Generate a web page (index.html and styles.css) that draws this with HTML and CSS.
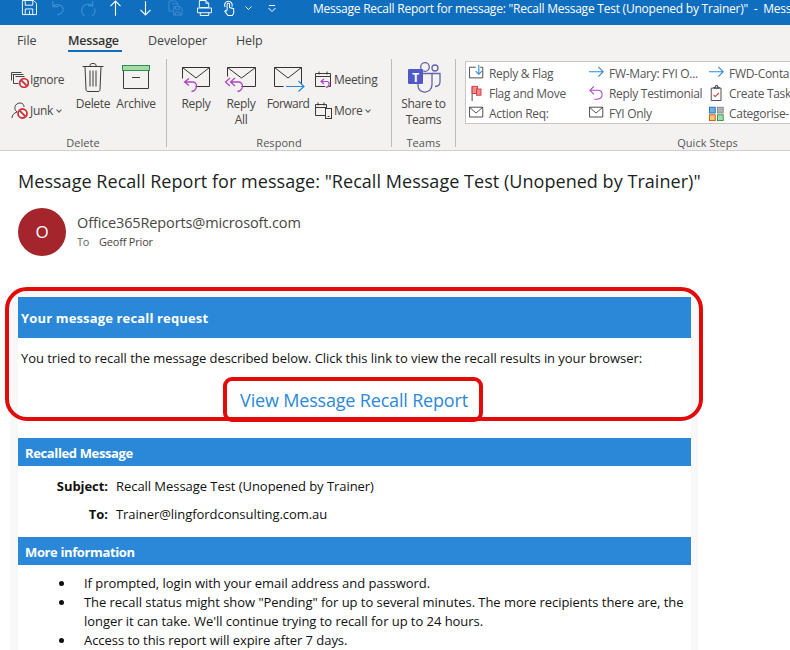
FILE: index.html
```html
<!DOCTYPE html>
<html lang="en">
<head>
<meta charset="utf-8">
<title>Message Recall Report</title>
<link rel="stylesheet" href="styles.css">
</head>
<body>
<div class="window">
  <header class="titlebar">
    <div class="qat">
      <svg class="qat-icon w-save" viewBox="0 0 17 17"><path d="M1.500 .5h12l3 3v12h-15z M4.500 .5v5h8v-5 M4.500 15.500v-6h8v6 M9 11.500v4" fill="none" stroke="#fff"/></svg>
      <svg class="qat-icon w-undo" viewBox="0 0 16 17"><path d="M3 1v6h6 M3 7c3-4 11-2 11 3 0 3-3 5-6 6" fill="none" stroke="#3f8fd4" stroke-width="1.200"/></svg>
      <svg class="qat-icon w-redo" viewBox="0 0 17 17"><path d="M14 1v5h-5 M14 6A7 7 0 1 0 16 9" fill="none" stroke="#3f8fd4" stroke-width="1.200"/></svg>
      <svg class="qat-icon w-up" viewBox="0 0 12 17"><path d="M6 17V1 M.5 6.500L6 1l5.500 5.500" fill="none" stroke="#fff" stroke-width="1.200"/></svg>
      <svg class="qat-icon w-down" viewBox="0 0 12 17"><path d="M6 1v15 M.5 10.500L6 16l5.500-5.500" fill="none" stroke="#fff" stroke-width="1.200"/></svg>
      <svg class="qat-icon w-copy" viewBox="0 0 16 17"><path d="M1 1h7l2 2v3 M1 1v11h4 M4 4h6l1 1 M6 7h7l2 2v7H6z M8 7v3h4V7 M8 16v-3h5v3" fill="none" stroke="#3f8fd4"/></svg>
      <svg class="qat-icon w-print" viewBox="0 0 16 17"><path d="M2.500 8V.5h7l3 3V8 M9.500 .5v3h3 M3.500 8h9 M.5 8.500h15v5h-15z M3.500 13.500v3h9v-3" fill="none" stroke="#fff"/></svg>
      <svg class="qat-icon w-touch" viewBox="0 0 14 17"><path d="M5 11V4.500a1.300 1.300 0 0 1 2.600 0V8l4.400 1.200V14l-1.500 2.500H6L2.500 12l1-1L5 12 M3 7.500A4 4 0 1 1 10 7" fill="none" stroke="#fff" stroke-width="1.100"/></svg>
      <svg class="qat-icon w-chev" viewBox="0 0 7 4"><path d="M.5 .5L3.500 3.500 6.500 .5" fill="none" stroke="#fff"/></svg>
      <svg class="qat-icon w-cust" viewBox="0 0 8 7"><path d="M1 .5h6 M.5 3L4 6.500 7.500 3" fill="none" stroke="#fff"/></svg>
    </div>
    <div class="title-text">Message Recall Report for message: "Recall Message Test (Unopened by Trainer)"&nbsp; -&nbsp; Message (HTML)</div>
  </header>

  <nav class="tabs">
    <span class="tab tab-file">File</span>
    <span class="tab tab-message">Message</span>
    <span class="tab tab-dev">Developer</span>
    <span class="tab tab-help">Help</span>
  </nav>

  <section class="ribbon">
    <div class="group g-delete">
      <div class="group-body">
        <div class="small-col col-del">
          <div class="small-btn">
            <svg class="sm-icon" viewBox="0 0 18 18"><path d="M.5 2.500h10 M1.500 4.500h11 M.5 2.500v8 M2.500 4.500v9h5 M4.500 6.500h9" fill="none" stroke="#444"/><circle cx="13" cy="13" r="4.300" fill="#fff" stroke="#d13438" stroke-width="1.800"/><path d="M10 10l6 6" stroke="#d13438" stroke-width="1.800"/></svg>
            <span>Ignore</span>
          </div>
          <div class="small-btn">
            <svg class="sm-icon" viewBox="0 0 18 18"><path d="M1 17c0-3 2-5 5-6-4-3-2-9 3-9 3 0 4 2 4 4" fill="none" stroke="#444"/><circle cx="11.500" cy="12.500" r="4.500" fill="#fff" stroke="#d13438" stroke-width="1.800"/><path d="M8.500 9.500l6 6" stroke="#d13438" stroke-width="1.800"/></svg>
            <span>Junk<i class="caret"></i></span>
          </div>
        </div>
        <div class="big-btn b-delete">
          <svg class="big-icon" viewBox="0 0 44 37"><path d="M11.500 7.500h21 M14 7.500l1 23c0 1 .5 2 2 2h10c1.500 0 2-1 2-2l1-23 M19 7.500V6c0-2 6-2 6 0v1.500 M19 11.500v16 M22 11.500v16 M25 11.500v16" fill="none" stroke="#3b3a39" stroke-width="1"/></svg>
          <span>Delete</span>
        </div>
        <div class="big-btn b-archive">
          <svg class="big-icon" viewBox="0 0 42 37"><path d="M8.500 11.500v18h25v-18" fill="none" stroke="#3b3a39"/><rect x="7.500" y="6.500" width="27" height="5" fill="#a4dba6" stroke="#2f8f4e"/><path d="M17 18.500h8" stroke="#3b3a39"/></svg>
          <span>Archive</span>
        </div>
      </div>
      <div class="group-label">Delete</div>
    </div>

    <div class="group g-respond">
      <div class="group-body">
        <div class="big-btn b-reply">
          <svg class="big-icon" viewBox="0 0 46 37"><path d="M9.500 8.500h27v19h-14 M9.500 8.500v11 M9.500 8.500L23 19 36.500 8.500" fill="none" stroke="#333"/><path d="M16 19.500l-4.500 3.500 4.500 3.500 M11.500 23h8c5 0 6 8-1 9.500" fill="none" stroke="#b146c2" stroke-width="1.300"/></svg>
          <span>Reply</span>
        </div>
        <div class="big-btn b-replyall">
          <svg class="big-icon" viewBox="0 0 44 37"><path d="M8.500 8.500h28v19h-14 M8.500 8.500v9 M8.500 8.500L22.500 19 36.500 8.500" fill="none" stroke="#333"/><path d="M11 19l-4.500 4 4.500 4 M16 19l-4.500 4 4.500 4 M11.500 23h8c5 0 6 8-1 9.500" fill="none" stroke="#b146c2" stroke-width="1.300"/></svg>
          <span>Reply<br>All</span>
        </div>
        <div class="big-btn b-forward">
          <svg class="big-icon" viewBox="0 0 50 37"><path d="M11.500 8.500h27v17 M11.500 8.500v19h9 M11.500 8.500L25 19 38.500 8.500" fill="none" stroke="#333"/><path d="M23 27.500h17 M35.500 22l5.500 5.500-5.500 5" fill="none" stroke="#2b88d8" stroke-width="1.200"/></svg>
          <span class="label-forward">Forward</span>
        </div>
        <div class="small-col col-resp">
          <div class="small-btn">
            <svg class="sm-icon" viewBox="0 0 18 18"><path d="M.5 3.500h15v13h-15z M.5 6.500h15 M4 1.500v3 M12 1.500v3" fill="none" stroke="#3b3a39"/><path d="M9 9l-3 2.500L9 14 M6 11.500h6c3 0 3 5-1 6" fill="#f3f2f1" stroke="#b146c2" stroke-width="1.200"/></svg>
            <span>Meeting</span>
          </div>
          <div class="small-btn">
            <svg class="sm-icon" viewBox="0 0 18 18"><path d="M.5 3.500h11v11h-11z M.5 6.500h11 M3 1.500v3 M9 1.500v3" fill="none" stroke="#3b3a39"/><rect x="10.500" y="7.500" width="6" height="10" fill="#f3f2f1" stroke="#3b3a39"/><path d="M12.500 15.500h2" stroke="#3b3a39"/></svg>
            <span>More<i class="caret"></i></span>
          </div>
        </div>
      </div>
      <div class="group-label">Respond</div>
    </div>

    <div class="group g-teams">
      <div class="group-body">
        <div class="big-btn b-teams">
          <svg class="big-icon" viewBox="0 0 63 37">
            <circle cx="33" cy="8" r="4.300" fill="none" stroke="#6264a7" stroke-width="1.300"/>
            <circle cx="43" cy="9" r="3" fill="none" stroke="#6264a7" stroke-width="1.300"/>
            <path d="M40 14.500h8v8c0 3-2 5-5 5" fill="none" stroke="#6264a7" stroke-width="1.300"/>
            <path d="M26 14.500h14v11c0 10-14 10-14 1z" fill="#f3f2f1" stroke="#6264a7" stroke-width="1.300"/>
            <rect x="16" y="10" width="15" height="15" rx="1" fill="#5059c9"/>
            <text class="teams-t" x="23.500" y="22.500">T</text>
          </svg>
          <span>Share to<br>Teams</span>
        </div>
      </div>
      <div class="group-label">Teams</div>
    </div>

    <div class="group g-quick">
      <div class="group-body">
        <div class="gallery">
          <div class="qs">
            <svg class="qs-icon" viewBox="0 0 18 18"><path d="M.5 2.500v12h15v-12h-3 M.5 2.500h7" fill="none" stroke="#3b3a39"/><path d="M11 0v10 M7.500 7l3.500 3.500L14.500 7" fill="none" stroke="#2b88d8" stroke-width="1.200"/></svg>
            <span>Reply &amp; Flag</span>
          </div>
          <div class="qs">
            <svg class="qs-icon" viewBox="0 0 18 18"><path d="M3.500 2v16" stroke="#3b3a39"/><rect x="3.500" y="1.500" width="6" height="8" fill="#f28b8b" stroke="#d13438"/><rect x="8.500" y="4.500" width="5" height="7" fill="#f28b8b" stroke="#d13438"/></svg>
            <span>Flag and Move</span>
          </div>
          <div class="qs">
            <svg class="qs-icon" viewBox="0 0 18 18"><path d="M.5 2.500h15v11h-15z M.5 2.500L8 9l7.500-6.500" fill="none" stroke="#3b3a39"/></svg>
            <span>Action Req:</span>
          </div>
          <div class="qs">
            <svg class="qs-icon" viewBox="0 0 18 18"><path d="M0 7.500h15 M10.500 2l5.500 5.500L10.500 13" fill="none" stroke="#2b88d8" stroke-width="1.200"/></svg>
            <span>FW-Mary: FYI O...</span>
          </div>
          <div class="qs">
            <svg class="qs-icon" viewBox="0 0 18 18"><path d="M5.500 1.500L1 6l4.500 4.500 M1 6h9c6 0 7 9-1 10H6" fill="none" stroke="#b146c2" stroke-width="1.200"/></svg>
            <span>Reply Testimonial</span>
          </div>
          <div class="qs">
            <svg class="qs-icon" viewBox="0 0 18 18"><path d="M.5 2.500h15v11h-15z M.5 2.500L8 9l7.500-6.500" fill="none" stroke="#3b3a39"/></svg>
            <span>FYI Only</span>
          </div>
          <div class="qs">
            <svg class="qs-icon" viewBox="0 0 18 18"><path d="M0 7.500h15 M10.500 2l5.500 5.500L10.500 13" fill="none" stroke="#2b88d8" stroke-width="1.200"/></svg>
            <span>FWD-Conta</span>
          </div>
          <div class="qs">
            <svg class="qs-icon" viewBox="0 0 18 18"><path d="M2.500 3.500h11v14h-11z M5.500 3.500v-1h2V.5h2v2h2v1z" fill="#fff" stroke="#3b3a39"/><path d="M5 11l2 2 4-4" fill="none" stroke="#d13438" stroke-width="1.200"/></svg>
            <span>Create Task</span>
          </div>
          <div class="qs">
            <svg class="qs-icon" viewBox="0 0 18 18"><rect x=".5" y="2.500" width="6.500" height="6.500" fill="#71afe5" stroke="#106ebe"/><rect x="9.500" y="2.500" width="6.500" height="6.500" fill="#b3b0ad" stroke="#8a8886"/><rect x=".5" y="11" width="6.500" height="6.500" fill="#f9c66b" stroke="#ca5010"/><rect x="9.500" y="11" width="6.500" height="6.500" fill="#a4dba6" stroke="#2f8f4e"/></svg>
            <span>Categorise-</span>
          </div>
        </div>
      </div>
      <div class="group-label">Quick Steps</div>
    </div>
  </section>

  <main class="message">
    <h1 class="subject">Message Recall Report for message: "Recall Message Test (Unopened by Trainer)"</h1>
    <div class="sender">
      <div class="avatar">O</div>
      <div class="sender-text">
        <div class="sender-mail">Office365Reports@microsoft.com</div>
        <div class="sender-to"><span class="to-label">To</span><span>Geoff Prior</span></div>
      </div>
    </div>

    <div class="mail-shell">
      <article class="card">
        <h2 class="band band-main">Your message recall request</h2>
        <p class="intro">You tried to recall the message described below. Click this link to view the recall results in your browser:</p>
        <div class="link-row"><a class="report-link">View Message Recall Report</a></div>

        <h2 class="band band-sub">Recalled Message</h2>
        <div class="meta">
          <b>Subject:</b><span>Recall Message Test (Unopened by Trainer)</span>
          <b>To:</b><span>Trainer@lingfordconsulting.com.au</span>
        </div>

        <h2 class="band band-sub">More information</h2>
        <ul class="info">
          <li><span>If prompted, login with your email address and password.</span></li>
          <li><span>The recall status might show "Pending" for up to several minutes. The more recipients there are, the longer it can take. We'll continue trying to recall for up to 24 hours.</span></li>
          <li><span>Access to this report will expire after 7 days.</span></li>
        </ul>
      </article>
    </div>

    <div class="mark mark-outer"></div>
    <div class="mark mark-inner"></div>
  </main>
</div>
</body>
</html>
```
FILE: styles.css
```css
* { box-sizing: border-box; }
html, body { margin: 0; padding: 0; }
body {
  width: 790px;
  height: 650px;
  overflow: hidden;
  background: #fff;
  font-family: "Open Sans", "Noto Sans", "Liberation Sans", sans-serif;
}
.window { width: 790px; height: 650px; overflow: hidden; display: flex; flex-direction: column; }

/* title bar */
.titlebar { height: 25px; flex: none; background: #106ebe; display: flex; color: #fff; overflow: hidden; }
.qat { width: 313px; flex: none; display: flex; align-items: flex-start; padding: 0 0 0 21px; }
.qat-icon { display: block; height: 16px; flex: none; }
.w-save { width: 16px; }
.w-undo { width: 15px; margin-left: 13px; }
.w-redo { width: 17px; margin-left: 14px; }
.w-up { width: 11px; margin-left: 14px; }
.w-down { width: 11px; margin-left: 19px; }
.w-copy { width: 15px; margin-left: 17px; }
.w-print { width: 15px; margin-left: 14px; }
.w-touch { width: 14px; margin-left: 10px; }
.w-chev { width: 7px; height: 4px; margin: 6px 0 0 9px; }
.w-cust { width: 8px; height: 7px; margin: 5px 0 0 16px; }
.title-text { font-size: 12px; line-height: 18px; white-space: nowrap; letter-spacing: -.23px; }

/* tabs */
.tabs { height: 30px; flex: none; background: #f3f2f1; display: flex; font-size: 12.500px; color: #444; }
.tab { display: block; height: 27px; line-height: 31px; letter-spacing: -.1px; }
.tab-file { margin-left: 17px; width: 51px; }
.tab-message { width: 54px; color: #333; font-weight: 600; letter-spacing: -.2px; border-bottom: 2px solid #106ebe; }
.tab-dev { margin-left: 26px; width: 88px; }
.tab-help { width: 30px; }

/* ribbon */
.ribbon { height: 96px; flex: none; background: #f3f2f1; border-bottom: 1px solid #d2d0ce; display: flex; font-size: 12px; color: #484644; overflow: hidden; letter-spacing: -.3px; }
.group { flex: none; height: 88px; margin-top: 4px; border-right: 1px solid #bdbbb9; display: flex; flex-direction: column; }
.group-body { height: 76px; flex: none; display: flex; }
.group-label { height: 16px; line-height: 16px; text-align: center; font-size: 11px; color: #555; letter-spacing: .05px; }
.g-delete { width: 167px; padding-left: 11px; }
.g-delete .group-label { margin-left: -11px; }
.g-respond { width: 225px; padding-left: 6px; }
.g-respond .group-label { margin-left: -6px; }
.g-teams { width: 64px; }
.g-quick { width: 494px; border-right: 0; padding-left: 9px; }

.small-col { display: flex; flex-direction: column; gap: 11px; padding-top: 10px; flex: none; }
.col-del { width: 60px; }
.col-resp { margin-left: 2px; }
.small-btn { height: 20px; display: flex; align-items: center; gap: 1px; white-space: nowrap; }
.sm-icon { width: 18px; height: 18px; flex: none; display: block; }
.caret { display: inline-block; width: 4px; height: 4px; border: solid #555; border-width: 0 1px 1px 0; transform: rotate(45deg); margin: 0 0 3px 4px; }

.big-btn { flex: none; text-align: center; line-height: 16px; white-space: nowrap; }
.big-icon { display: block; height: 37px; }
.label-forward { letter-spacing: -.55px; }
.b-delete { width: 44px; }
.b-archive { width: 42px; }
.b-delete .big-icon { width: 44px; }
.b-archive .big-icon { width: 42px; }
.b-reply { width: 46px; }
.b-reply .big-icon { width: 46px; }
.b-replyall { width: 44px; }
.b-replyall .big-icon { width: 44px; }
.b-forward { width: 50px; }
.b-forward .big-icon { width: 50px; }
.b-teams { width: 63px; }
.b-teams .big-icon { width: 63px; }
.teams-t { font-family: "Open Sans", sans-serif; font-weight: 700; font-size: 12px; fill: #fff; text-anchor: middle; }

.gallery { margin-top: 2px; width: 340px; height: 63px; background: #fff; border: 1px solid #c8c6c4; border-right: 0; display: grid; grid-template-columns: repeat(3, 120px); grid-template-rows: repeat(3, 20px); grid-auto-flow: column; padding: 1px 0 0 3px; overflow: hidden; flex: none; }
.qs { display: flex; align-items: center; gap: 4px; white-space: nowrap; height: 20px; overflow: hidden; color: #555; }
.qs-icon { width: 16px; height: 18px; flex: none; display: block; overflow: visible; }

/* message */
.message { position: relative; flex: 1; background: #fff; padding: 0 0 0 10px; }
.subject { margin: 19px 0 0 8px; font-size: 18px; line-height: 22px; font-weight: 400; color: #201f1e; white-space: nowrap; letter-spacing: .04px; }
.sender { display: flex; margin: 16px 0 0 8px; gap: 11px; color: #484644; }
.avatar { width: 48px; height: 48px; border-radius: 50%; background: #a4262c; color: #fff; font-size: 17px; line-height: 48px; text-align: center; }
.sender-text { padding-top: 5px; }
.sender-mail { font-size: 14.500px; line-height: 20px; letter-spacing: -.13px; }
.sender-to { font-size: 11px; line-height: 18px; display: flex; letter-spacing: -.2px; }
.to-label { width: 22px; color: #666; }

.mail-shell { margin-top: 33px; width: 688px; background: #f8f8f8; padding: 8px 7px 0 8px; height: 400px; }
.card { background: #fff; width: 673px; height: 392px; color: #111; font-size: 13px; letter-spacing: -.05px; }
.band { margin: 0; background: #2b88d8; color: #fff; font-size: 13px; font-weight: 700; }
.band-main { height: 41px; line-height: 43px; padding-left: 3px; letter-spacing: .15px; }
.band-sub { height: 28px; line-height: 30px; padding-left: 7px; letter-spacing: -.37px; }
.intro { margin: 0; padding: 10px 0 0 3px; height: 40px; line-height: 20px; white-space: nowrap; }
.link-row { height: 60px; padding-top: 9px; text-align: center; }
.report-link { font-size: 18px; line-height: 26px; color: #2b88d8; letter-spacing: -.18px; display: block; margin-right: 1px; }
.meta { height: 71px; display: grid; grid-template-columns: 90px auto; column-gap: 8px; grid-auto-rows: 28px; align-content: start; padding-top: 6px; line-height: 28px; }
.meta b { text-align: right; font-weight: 700; }
.info { margin: 0; padding: 9px 7px 0 41px; line-height: 19px; list-style: none; }
.info li { display: flex; align-items: flex-start; }
.info li::before { content: ""; flex: none; width: 5px; height: 5px; margin: 7px 20px 0 0; border-radius: 50%; background: #111; }

/* red annotation outlines lying over the mail */
.mark { position: absolute; border: 4px solid #e30a0a; pointer-events: none; }
.mark-outer { left: 5px; top: 136px; width: 698px; height: 134px; border-radius: 22px; }
.mark-inner { left: 223px; top: 226px; width: 260px; height: 45px; border-radius: 9px; }
```
